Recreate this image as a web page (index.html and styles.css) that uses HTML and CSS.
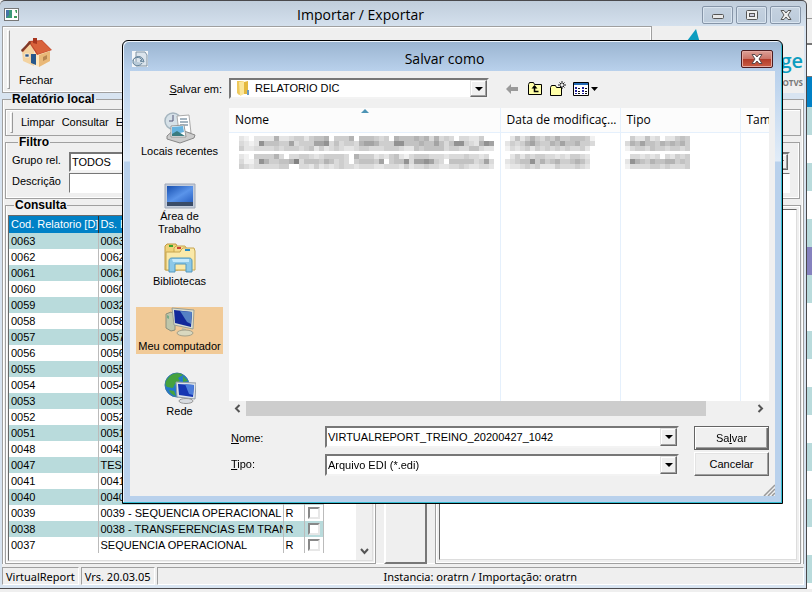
FILE: index.html
```html
<!DOCTYPE html>
<html lang="pt-BR">
<head>
<meta charset="utf-8">
<title>Importar / Exportar</title>
<link rel="stylesheet" href="styles.css">
</head>
<body>
<div class="desktop">
<main class="window">
  <header class="titlebar">
    <svg class="app-icon" viewBox="0 0 15 13"><rect x=".5" y=".5" width="14" height="12" fill="#fff" stroke="#777"/><rect x="2" y="2" width="6" height="8" fill="#3a9a78"/><path d="M2 2h3v5l-3 3z" fill="#4674a8"/><path d="M11 2h2v3h-1zM10 8h3v2h-3z" fill="#3f9d5c"/></svg>
    <h1 class="title">Importar / Exportar</h1>
    <div class="window-buttons">
      <button class="win-btn" aria-label="Minimizar"><svg viewBox="0 0 12 12"><rect x=".5" y="5.5" width="11" height="4" rx="1" fill="#e8e8e8" stroke="#555"/></svg></button>
      <button class="win-btn" aria-label="Maximizar"><svg viewBox="0 0 12 12"><rect x=".5" y="1.500" width="11" height="9" rx="1" fill="#eee" stroke="#555"/><rect x="3.500" y="4.500" width="5" height="3" fill="#ccd" stroke="#555"/></svg></button>
      <button class="win-btn" aria-label="Fechar janela"><svg viewBox="0 0 12 12"><path d="M1 1.500h3l2 2.500 2-2.500h3L8 6l3 4.500H8L6 8l-2 2.500H1L4 6z" fill="#eee" stroke="#555"/></svg></button>
    </div>
  </header>

  <div class="top-row">
    <div class="toolbar">
      <div class="grip"></div>
      <button class="tool-home">
        <svg viewBox="0 0 32 32"><path d="M2 15 11 6l3 9v15L3 25z" fill="#f3d3a1"/><path d="M13 18 20 9l10 8v8l-11 6-6-3z" fill="#ffe7bd"/><path d="m19 19 11-4v10l-11 6z" fill="#e9b878"/><path d="M9 5 2 15l1 1 7-8 7 11 15-5-10-10z" fill="#c2492c"/><path d="m10 6 8 12 13-4-9-9z" fill="#d9633c"/><path d="M13 2h4v6l-4-1z" fill="#a8361f"/><path d="m1 14 9-9 1 2-9 9z" fill="#7c3b2a"/><path d="M11 18h5v11l-5-2z" fill="#27588c"/><path d="M5 18h4v3H5z" fill="#31557d" stroke="#fff" stroke-width=".6"/><path d="m23 21 4-2v4l-4 2z" fill="#b78651"/></svg>
        <span>Fechar</span>
      </button>
    </div>
    <div class="brand">
      <svg class="brand-mark" viewBox="0 0 14 14"><path d="M0 12 9 0l4 14H0z" fill="#0d9dc0"/></svg>
      <div class="brand-name">ge</div>
      <div class="brand-sub">OTVS</div>
    </div>
  </div>

  <fieldset class="group outer">
    <legend>Relatório local</legend>
    <div class="menu">
      <div class="grip"></div>
      <button>Limpar</button><button>Consultar</button><button>Exportar</button>
    </div>
    <fieldset class="group filter">
      <legend>Filtro</legend>
      <label for="grupo">Grupo rel.</label>
      <div class="combo"><select id="grupo"><option>TODOS</option></select><span class="arrow"></span></div>
      <label for="descricao">Descrição</label>
      <input id="descricao" class="field" type="text">
    </fieldset>
    <div class="columns">
      <fieldset class="group query">
        <legend>Consulta</legend>
        <div class="grid-box">
          <div class="grid-scroll">
          <table class="grid">
            <thead><tr><th class="c-cod">Cod. Relatorio [D]</th><th class="c-ds">Ds. Relatorio</th><th class="c-r"></th><th class="c-k"></th></tr></thead>
            <tbody id="reports"></tbody>
          </table>
          </div>
          <div class="vscroll"><svg viewBox="0 0 9 7"><path d="m1 1 3.500 4L8 1" fill="none" stroke="#555" stroke-width="2"/></svg></div>
        </div>
      </fieldset>
      <div class="mid-panel"></div>
      <div class="detail"><div class="detail-box"></div></div>
    </div>
  </fieldset>

  <footer class="status">
    <span>VirtualReport</span><span>Vrs. 20.03.05</span><span class="wide">Instancia: oratrn / Importação: oratrn</span>
  </footer>
</main>
<div class="behind"><i class="b-top"></i><i class="b-white"></i><i class="b-blue"></i><i class="b-rows"></i></div>
</div>

<section class="dialog" role="dialog" aria-labelledby="dlg-title">
  <header class="dlg-title">
    <svg class="dlg-icon" viewBox="0 0 16 16"><path d="M0 0h16v16H0z" fill="#f5f7f9"/><path d="M4 1h9l2 3v11H4z" fill="#dbe4ec" stroke="#8195a5"/><path d="M1 10c0-4 7-5 9-1l-2 1 4 1-1-3c-3-5-11-2-10 4 2 4 8 3 9 0" fill="#b8cad8" stroke="#66849b"/></svg>
    <h2 id="dlg-title">Salvar como</h2>
    <button class="close" aria-label="Fechar"><svg viewBox="0 0 12 12"><path d="M1 1.500h3l2 2.500 2-2.500h3L8 6l3 4.500H8L6 8l-2 2.500H1L4 6z" fill="#fff" stroke="#5a4a4c"/></svg></button>
  </header>
  <div class="dlg-body">
    <label class="save-in" for="pasta"><u>S</u>alvar em:</label>
    <div class="location">
      <div class="combo folder">
        <svg viewBox="0 0 16 16"><path d="M2 1h6v13l-4 1-2-2z" fill="#eec95c"/><path d="M4 2 9 1v13l-4 2z" fill="#fbe69a"/><path d="m9 2 4-1v13H9z" fill="#e4b93f"/><path d="M12 10h2v5h-2z" fill="#6a9bc4"/></svg>
        <select id="pasta"><option>RELATORIO DIC</option></select><span class="arrow"></span>
      </div>
      <div class="nav">
        <button aria-label="Voltar"><svg viewBox="0 0 16 16"><path d="M2 8l5-5v3h7v4H7v3z" fill="#9a9a9a"/></svg></button>
        <button aria-label="Acima"><svg viewBox="0 0 16 16"><path d="M1.500 13.500v-10l1-2h4l1 2h7v10z" fill="#ffffa8" stroke="#000"/><path d="M7.500 5v5.500h4" fill="none" stroke="#000" stroke-width="1.500"/><path d="m4.500 7.500 3-3.500 3 3.500z"/></svg></button>
        <button aria-label="Nova pasta"><svg viewBox="0 0 16 16"><path d="M.5 14.500v-8l1-2h4l1 2h5v8z" fill="#ffffa8" stroke="#000"/><path d="M12 0v3m0 2v3M8 4h3m2 0h3M9.500 1.500l1.500 1.500m2 2 1.500 1.500m0-5L13 3m-2 2L9.500 6.500" stroke="#000" stroke-width=".9"/></svg></button>
        <button class="views" aria-label="Exibir"><svg viewBox="0 0 27 16"><path d="M.5 1.500h15v13H.5z" fill="#fff" stroke="#000"/><path d="M1 2h14v2H1z" fill="#2369b5"/><path d="M2 6h2v2H2zm0 3h2v2H2zm0 3h2v1H2zM9 6h2v2H9zm0 3h2v2H9zm0 3h2v1H9z" fill="#22229a"/><path d="M5 7.500h2m5 0h2M5 10.500h2m5 0h2M5 12.500h2m5 0h2" stroke="#111"/><path d="M18 6h7l-3.500 4z"/></svg></button>
      </div>
    </div>

    <ul class="places">
      <li><button><svg viewBox="0 0 32 32"><circle cx="9" cy="9" r="8" fill="#d6e1e8" stroke="#a5b5bf" stroke-width="1.500"/><path d="M9 3v6H5" fill="none" stroke="#557"/><path d="m13 4 12-1 2 18H15z" fill="#fff" stroke="#aaa"/><path d="M16 7h7m-7 3h8m-8 3h8" stroke="#4a6b83"/><path d="m3 24 9-8 19 7-1 3-14 5-13-4z" fill="#ccc" stroke="#888"/><path d="m7 14 13-1 2 12H7z" fill="#fff" stroke="#999"/><path d="m8 15 11-1 1 6-12 3z" fill="#66b3df"/><path d="m8 22 5-3 8 5H8z" fill="#397b80"/></svg><span>Locais recentes</span></button></li>
      <li><button><svg viewBox="0 0 32 32"><defs><linearGradient id="desk" x2="1" y2="1"><stop stop-color="#174fb0"/><stop offset=".55" stop-color="#5a94ea"/><stop offset="1" stop-color="#2a62c4"/></linearGradient></defs><path d="M1 7h30v24H1z" fill="#c4cddc" stroke="#a0a9b8"/><path d="M3 9h26v16H3z" fill="url(#desk)"/><path d="M3 25h26v4H3z" fill="#3a4c68"/></svg><span>Área de<br>Trabalho</span></button></li>
      <li><button><svg viewBox="0 0 32 32"><path d="M1 4 3 2h9l2 4v22H1z" fill="#f0d27a" stroke="#c09a42"/><path d="M10 6 12 4h9l2 3v21H10z" fill="#f6dd8d" stroke="#c8a650"/><path d="M17 8l2-2h11l1 3v19H2V10h14z" fill="#fae9a9" stroke="#c8a650"/><path d="M5 3h4v2H5z" fill="#3aa52f"/><path d="M13 5h4v2h-4z" fill="#cc4336"/><path d="M21 7h5v2h-5z" fill="#278cc5"/><path d="M5 19c0-2 1-3 3-3h17c2 0 3 1 3 3v11h-6v-8H11v8H5z" fill="#8cc8e8" stroke="#5298be"/><path d="M8 17h17v3H9z" fill="#c5e9fa"/></svg><span>Bibliotecas</span></button></li>
      <li><button class="selected"><svg viewBox="0 0 32 32"><path d="m2 7 5-2 4 3v15l-4 1-5-3z" fill="#bfc6aa" stroke="#8d907c"/><path d="m3 8 2 1v3L3 11z" fill="#7a8"/><path d="m8 1 22 2-1 19-19-4z" fill="#d9dfd2" stroke="#9a9f95"/><path d="m10 3 18 2-1 15-16-4z" fill="#12299a"/><path d="m16 4 12 1-1 12-4-2z" fill="#5581c4"/><path d="m18 21 4 1v4h-5z" fill="#b9bca4"/><ellipse cx="21" cy="26" rx="8" ry="3" fill="#d9d8bf" stroke="#a4a18b"/></svg><span>Meu computador</span></button></li>
      <li><button><svg viewBox="0 0 32 32"><circle cx="13" cy="13" r="12" fill="#2478ca" stroke="#3a78a8"/><path d="M5 5c3-4 10-5 14-2l-5 3 2 3-5 3-2 4-6-1c-3-3-1-7 2-10zM5 18l5 1 2 5c-4-1-6-3-7-6zM19 4l5 5-5 1z" fill="#46a23e"/><path d="m12 10 20 1-1 16-18-2z" fill="#dce4ea" stroke="#929ba6"/><path d="m14 12 16 1-1 12-14-2z" fill="#1636b2"/><path d="m21 12 9 1-1 10-4-1z" fill="#4c7ddb"/><ellipse cx="22" cy="29" rx="7" ry="2.500" fill="#d9dce0" stroke="#999"/></svg><span>Rede</span></button></li>
    </ul>

    <div class="list-pane">
      <table class="files">
        <thead><tr><th class="f-name">Nome<svg class="sort" viewBox="0 0 8 4"><path d="M0 4 4 0l4 4z" fill="#4d94b5"/></svg></th><th class="f-date">Data de modificaç...</th><th class="f-type">Tipo</th><th>Tam</th></tr></thead>
        <tbody>
          <tr><td><svg class="mosaic" data-m="210222262234424556044460555434065556563634303322400;321285554473444778353443677644488555655753588432687760;422333343444345242343223443334443225455553443355322333200"></svg></td><td><svg class="mosaic" data-m="0252464354644555410;2434675446575564430;1323424343434334200"></svg></td><td><svg class="mosaic" data-m="0422523022454;3657554656564;1344354434434"></svg></td><td></td></tr>
          <tr><td><svg class="mosaic" data-m="210444463033443234444306444232452134443332333433230;311386445569355546534304555470455837787430555553473850;432333334400332423234332333223332423343322334322332200"></svg></td><td><svg class="mosaic" data-m="0242434433232443200;2345584645644565300;1223434222433343200"></svg></td><td><svg class="mosaic" data-m="0332323032434;2865465566454;1333344343334"></svg></td><td></td></tr>
          <tr class="fill"><td></td><td></td><td></td><td></td></tr>
        </tbody>
      </table>
      <div class="hscroll">
        <svg viewBox="0 0 7 9"><path d="M5.500 1 2 4.500 5.500 8" fill="none" stroke="#555" stroke-width="2"/></svg>
        <div class="track"><div class="thumb"></div></div>
        <svg viewBox="0 0 7 9"><path d="M1.500 1 5 4.500 1.500 8" fill="none" stroke="#555" stroke-width="2"/></svg>
      </div>
    </div>

    <form class="save-form">
      <label for="nome"><u>N</u>ome:</label>
      <div class="combo"><input id="nome" type="text" value="VIRTUALREPORT_TREINO_20200427_1042"><span class="arrow"></span></div>
      <button class="push default" type="button">Sa<u>l</u>var</button>
      <label for="tipo"><u>T</u>ipo:</label>
      <div class="combo low"><select id="tipo"><option>Arquivo EDI (*.edi)</option></select><span class="arrow"></span></div>
      <button class="push" type="button">Cancelar</button>
    </form>
    <svg class="resize" viewBox="0 0 12 12"><path d="M1 12 12 1M5 12l7-7M9 12l3-3" stroke="#999" stroke-width="1.500"/></svg>
  </div>
</section>
<script src="app.js"></script>
</body>
</html>
```
FILE: styles.css
```css
* { box-sizing: border-box; }
body {
  margin: 0;
  background: #efefef;
  color: #000;
  font: 11px/13px "Liberation Sans", sans-serif;
  position: relative;
}
button, input, select { font: inherit; color: inherit; }
button { padding: 0; border: 0; background: none; }
svg { display: block; }
h1, h2 { margin: 0; font: 14px/20px "Open Sans", sans-serif; text-align: center; flex: 1; }

.desktop { display: flex; min-height: 100vh; padding-bottom: 3px; overflow: hidden; }
.window {
  flex: 1;
  min-width: 0;
  display: flex;
  flex-direction: column;
  border: solid #4a494c;
  border-width: 1px 1px 1px 0;
  border-radius: 5px 5px 0 0;
  background: linear-gradient(#c0cddb, #d8e4f1 30px);
  padding: 0 2px 3px;
}
.titlebar { display: flex; align-items: center; height: 25px; padding: 2px 3px 0 2px; }
.app-icon { width: 15px; height: 13px; }
.window-buttons { display: flex; gap: 3px; }
.win-btn {
  width: 31px;
  height: 18px;
  display: grid;
  place-items: center;
  border: 1px solid #8695a8;
  border-radius: 2px;
  background: linear-gradient(#c5d2e0, #bccbdb);
  box-shadow: inset 0 0 0 1px #d9e4ef;
}
.win-btn svg { width: 12px; height: 12px; }

.top-row { display: flex; background: #efefef; height: 67px; }
.toolbar {
  width: 650px;
  flex: 0 1 auto;
  display: flex;
  border: 1px solid #a0a0a0;
  box-shadow: inset 1px 1px #fff, inset -1px -1px #fff;
  padding: 3px 4px;
}
.grip { width: 3px; border: 1px solid; border-color: #fff #999 #999 #fff; }
.tool-home { display: flex; flex-direction: column; align-items: center; margin: 6px 0 0 9px; gap: 6px; }
.tool-home svg { width: 32px; height: 32px; }
.brand { flex: 1; text-align: right; padding: 3px 1px 0 0; }
.brand-mark { width: 14px; height: 14px; margin-left: 35px; }
.brand-name { font: 20px/28px "Open Sans", sans-serif; color: #0d9dc0; margin-top: 4px; font-weight: 600; }
.brand-sub { font: bold 8px/10px "Open Sans", sans-serif; color: #777; margin-top: 3px; }

.group { margin: 0; border: 1px solid #a0a0a0; box-shadow: inset 1px 0 #fff, inset -1px -1px #fff; padding: 0; min-width: 0; }
legend { font-weight: bold; font-size: 12px; line-height: 13px; padding: 0 1px; margin-left: 6px; }
.outer { flex: 1; display: flex; flex-direction: column; background: #efefef; border-bottom: 0; padding: 3px 2px 0; }
.menu { display: flex; height: 27px; border: 1px solid #a0a0a0; box-shadow: inset 1px 1px #fff; padding: 2px 4px; }
.menu button { margin-left: 7px; }
.menu .grip + button { margin-left: 8px; }
.filter { display: grid; grid-template-columns: 50px 1fr; column-gap: 7px; row-gap: 1px; padding: 3px 9px 5px 6px; margin-right: 1px; }
.filter label { line-height: 17px; white-space: nowrap; }
.filter .combo, .field { height: 20px; }
.field {
  width: 100%;
  min-width: 0;
  border: 1px solid;
  border-color: #777 #fff #fff #777;
  background: #fff;
  outline: 0;
}

.combo {
  display: flex;
  align-items: stretch;
  height: 21px;
  min-width: 0;
  background: #fff;
  border: 2px solid;
  border-color: #777 #f3f3f3 #f3f3f3 #777;
}
.combo select, .combo input {
  appearance: none;
  flex: 1;
  min-width: 0;
  border: 0;
  outline: 0;
  background: transparent;
  padding: 0 1px;
}
.combo .arrow {
  width: 17px;
  background: #f0f0f0;
  border: 1px solid;
  border-color: #e3e3e3 #696969 #696969 #e3e3e3;
  box-shadow: inset -1px -1px #a0a0a0, inset 1px 1px #fff;
  display: grid;
  place-items: center;
}
.arrow::after { content: ""; border: 4px solid transparent; border-top-color: #000; border-bottom: 0; }

.columns { flex: 1; display: flex; gap: 8px; }
.query { width: 371px; display: flex; padding: 3px 2px 2px; }
.grid-box { flex: 1; min-width: 0; display: flex; border: 1px solid; border-color: #696969 #ddd #ddd #696969; background: #fff; }
.grid-scroll { flex: 1; min-width: 0; overflow: hidden; }
.grid { border-collapse: collapse; table-layout: fixed; width: 315px; }
.grid th { background: #0081c6; color: #fff; font-weight: normal; text-align: left; height: 17px; padding: 0 2px; border-right: 1px solid #333; white-space: nowrap; overflow: hidden; }
.grid td { height: 16px; padding: 0 2px; line-height: 13px; border-right: 1px solid #bbb; white-space: nowrap; overflow: hidden; }
.grid tbody tr:nth-child(odd) { background: #b9dbdc; }
.c-cod { width: 89px; }
.c-ds { width: 185px; }
.c-r { width: 21px; }
.grid input { appearance: none; display: block; width: 12px; height: 12px; margin: 0 0 0 1px; background: #fff; border: 2px solid; border-color: #888 #e7e7e7 #e7e7e7 #888; }
.vscroll { width: 16px; background: #efefef; display: flex; flex-direction: column; justify-content: flex-end; align-items: center; padding-bottom: 5px; }
.vscroll svg { width: 9px; height: 7px; }
.mid-panel { width: 43px; border: 2px solid; border-color: #fff #777 #777 #fff; }
.detail { flex: 1; border: 1px solid #a0a0a0; box-shadow: inset 1px 1px #fff, inset -1px -1px #fff; margin: 6px 0 0; padding: 3px; display: flex; }
.detail-box { flex: 1; background: #fff; border: 1px solid; border-color: #696969 #ddd #ddd #696969; }

.status { display: flex; gap: 2px; background: #efefef; padding-top: 3px; font: 11px/18px "Noto Sans", sans-serif; }
.status span { border: 1px solid; border-color: #a0a0a0 #fff #fff #a0a0a0; padding: 0 3px; height: 18px; }
.status .wide { flex: 1; text-align: center; }

.behind { width: 5px; display: flex; flex-direction: column; }
.b-top { height: 45px; background: linear-gradient(#efefef 18px, #999 18px 19px, #efefef 19px 43px, #777 43px); }
.b-white { height: 32px; background: #fff; border-bottom: 1px solid #777; }
.b-blue { height: 30px; background: #0081c6; }
.b-rows { flex: 1; background: linear-gradient(transparent 140px, #8582be 140px 168px, transparent 168px), repeating-linear-gradient(#b9dbdc 0 28px, #fff 28px 56px); }

.dialog {
  position: absolute;
  top: 40px;
  left: 122px;
  right: 29px;
  border: 1px solid #000;
  border-radius: 6px 6px 0 0;
  padding: 0 7px 7px;
  background: linear-gradient(#9ab4d0, #b9d1ec 30px, #e1ecf8 120px, #b9d1ec 121px);
  box-shadow: inset -1px -1px #35bdd2, inset 1px 1px #eef5fc;
}
.dlg-title { display: flex; align-items: center; height: 30px; padding: 6px 2px 0; }
.dlg-icon { width: 16px; height: 16px; }
.close {
  width: 32px;
  height: 18px;
  display: grid;
  place-items: center;
  border: 1px solid #4c1c20;
  border-radius: 2px;
  background: linear-gradient(#dca097, #cb7468 48%, #b13a28 50%, #cb5d44);
  box-shadow: inset 0 0 0 1px #e5aaa2;
}
.close svg { width: 12px; height: 12px; }
.dlg-body {
  position: relative;
  display: grid;
  grid-template-columns: 99px minmax(0, 1fr);
  background: #f0f0f0;
  padding: 7px 6px 20px 0;
}
.save-in { justify-self: end; padding-right: 7px; line-height: 22px; }
.location { display: flex; gap: 15px; }
.folder { width: 260px; }
.folder svg { width: 16px; height: 16px; margin: 0 3px 0 4px; }
.nav { display: flex; gap: 7px; align-items: center; }
.nav svg { width: 16px; height: 16px; }
.nav .views svg { width: 27px; }

.places { grid-row: 2 / span 2; list-style: none; margin: 0; padding: 12px 6px 0; }
.places li { height: 65px; }
.places button { width: 100%; display: flex; flex-direction: column; align-items: center; white-space: nowrap; }
.places svg { width: 32px; height: 32px; }
.places span { padding: 1px 0; }
.places .selected { background: #f1ca97; }

.list-pane { margin-top: 8px; }
.files { width: 100%; height: 293px; table-layout: fixed; border-collapse: collapse; background: #fff; }
.files th { position: relative; height: 24px; padding: 0 6px; text-align: left; font: 12px/23px "Open Sans", sans-serif; background: #fcfcfc; border-bottom: 1px solid #e5f0fc; white-space: nowrap; overflow: hidden; }
.files th:last-child { padding-right: 0; }
.files th, .files td { border-right: 1px solid #e5f0fc; }
.files th:last-child, .files td:last-child { border-right: 0; }
.files td { height: 18px; padding: 3px 0 0 4px; vertical-align: top; overflow: hidden; }
.files td:first-child { padding-left: 10px; }
.files .fill td { height: auto; }
.f-name { width: 271px; }
.f-date, .f-type { width: 120px; }
.sort { position: absolute; top: 1px; left: 132px; width: 8px; height: 4px; }
.hscroll { display: flex; align-items: center; height: 15px; padding: 0 5px; gap: 5px; }
.hscroll svg { width: 7px; height: 9px; }
.track { flex: 1; height: 15px; }
.thumb { width: 91%; height: 15px; background: #cdcdcd; }

.save-form { display: grid; grid-template-columns: 94px minmax(0, 1fr) 75px; gap: 2px 0; margin: 10px 0 0 2px; }
.save-form label { line-height: 24px; }
.save-form .combo { margin-right: 15px; height: 22px; }
.save-form .low { align-self: end; }
.push { height: 24px; border: 1px solid; border-color: #fff #696969 #696969 #fff; box-shadow: inset -1px -1px #a0a0a0, inset 1px 1px #e3e3e3; background: #f0f0f0; }
.push.default { border-color: #646464; box-shadow: inset 1px 1px #fff, inset -1px -1px #696969, inset -2px -2px #a0a0a0; }
.resize { position: absolute; right: 0; bottom: 0; width: 12px; height: 12px; }
```
FILE: app.js
```js
const reports = [
  ["0063", "0063 -"], ["0062", "0062 -"], ["0061", "0061 -"], ["0060", "0060 -"], ["0059", "0032 -"],
  ["0058", "0058 -"], ["0057", "0057 -"], ["0056", "0056 -"], ["0055", "0055 -"], ["0054", "0054 -"],
  ["0053", "0053 -"], ["0052", "0052 -"], ["0051", "0051 -"], ["0048", "0048 -"], ["0047", "TESTE"],
  ["0041", "0041 -"], ["0040", "0040 -"], ["0039", "0039 - SEQUENCIA OPERACIONAL P"],
  ["0038", "0038 - TRANSFERENCIAS EM TRAN"], ["0037", "SEQUENCIA OPERACIONAL"]
];
document.getElementById("reports").innerHTML = reports.map(([code, name]) =>
  `<tr><td>${code}</td><td>${name}</td><td>R</td><td><input type="checkbox" aria-label="${code}"></td></tr>`
).join("");

// Redacted file names: each digit is the darkness of one mosaic cell.
const shades = ["#fff", "#f1f1f1", "#e5e5e5", "#dadada", "#cecece", "#c2c2c2", "#b3b3b3", "#a3a3a3", "#929292", "#828282"];
document.querySelectorAll(".mosaic").forEach(svg => {
  const rows = svg.dataset.m.split(";");
  const width = rows[0].length * 5;
  svg.setAttribute("width", width);
  svg.setAttribute("height", 15);
  svg.setAttribute("viewBox", `0 0 ${width} 15`);
  svg.setAttribute("shape-rendering", "crispEdges");
  svg.innerHTML = rows.map((row, y) => [...row.slice(0, rows[0].length)].map((d, x) =>
    `<rect x="${x * 5}" y="${y * 5}" width="5" height="5" fill="${shades[d]}"/>`).join("")).join("");
});

const nameField = document.getElementById("nome");
nameField.focus();
nameField.setSelectionRange(20, 20);
```
